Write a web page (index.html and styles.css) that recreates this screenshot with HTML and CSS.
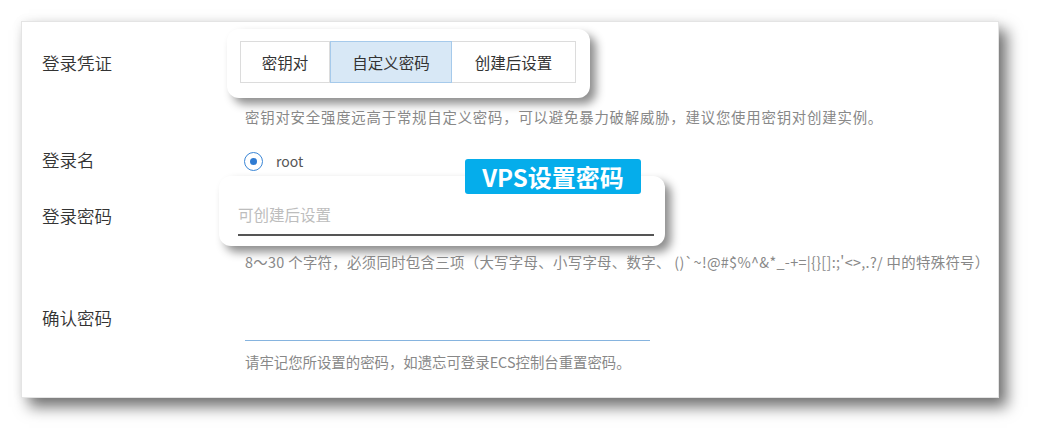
FILE: index.html
```html
<!DOCTYPE html>
<html lang="zh-CN">
<head>
<meta charset="utf-8">
<title>VPS设置密码</title>
<link rel="stylesheet" href="styles.css">
</head>
<body>
<div class="panel">
  <div class="row row-cred">
    <div class="label label-cred">登录凭证</div>
    <div class="field">
      <div class="callout seg-callout">
        <div class="seg">
          <div class="seg-btn seg-a">密钥对</div>
          <div class="seg-btn seg-b active">自定义密码</div>
          <div class="seg-btn seg-c">创建后设置</div>
        </div>
      </div>
      <div class="hint hint-1">密钥对安全强度远高于常规自定义密码，可以避免暴力破解威胁，建议您使用密钥对创建实例。</div>
    </div>
  </div>

  <div class="row row-name">
    <div class="label">登录名</div>
    <div class="field radio-line">
      <span class="radio"><span class="dot"></span></span>
      <span class="radio-text">root</span>
    </div>
  </div>

  <div class="row row-pwd">
    <div class="label label-pwd">登录密码</div>
    <div class="field">
      <div class="callout pwd-callout">
        <div class="pwd-input">可创建后设置</div>
      </div>
      <div class="hint hint-2">8～30 个字符，必须同时包含三项（大写字母、小写字母、数字、 ()`~!@#$%^&amp;*_-+=|{}[]:;'&lt;&gt;,.?/ 中的特殊符号）</div>
    </div>
  </div>

  <div class="row row-confirm">
    <div class="label">确认密码</div>
    <div class="field">
      <div class="confirm-input"></div>
      <div class="hint hint-3">请牢记您所设置的密码，如遗忘可登录ECS控制台重置密码。</div>
    </div>
  </div>

  <div class="badge">VPS设置密码</div>
</div>
</body>
</html>
```

FILE: styles.css
```css
* { box-sizing: border-box; }

html, body {
  margin: 0;
  padding: 0;
  background: #ffffff;
}

body {
  width: 1041px;
  height: 441px;
  overflow: hidden;
  font-family: "Noto Sans CJK SC", "Noto Sans", sans-serif;
  color: #333;
}

.panel {
  position: relative;
  margin: 21px 0 0 21px;
  width: 978px;
  height: 377px;
  background: #fff;
  border: 1px solid #e4e4e4;
  padding: 0 0 0 20px;
  box-shadow: 8px 9px 14px rgba(0, 0, 0, 0.55), 0 0 10px rgba(0, 0, 0, 0.06);
}

.row {
  display: flex;
  align-items: flex-start;
}

.label {
  width: 203px;
  flex: none;
  font-size: 17.5px;
  font-weight: 350;
  line-height: 24px;
  color: #333;
}

.field {
  flex: 1;
  min-width: 0;
}

/* Row 1 */
.row-cred { padding-top: 7px; }
.label-cred { margin-top: 22px; }

.callout {
  background: #fff;
  border-radius: 12px;
  box-shadow: 6px 6px 10px rgba(0, 0, 0, 0.45);
}

.seg-callout {
  width: 363px;
  height: 69px;
  margin-left: -18px;
  padding: 12px 0 0 13px;
}

.seg {
  display: flex;
  height: 42px;
}

.seg-btn {
  height: 42px;
  display: flex;
  align-items: center;
  justify-content: center;
  font-size: 15.5px;
  color: #333;
  border: 1px solid #dcdcdc;
  background: #fff;
}

.seg-a { width: 90px; }
.seg-b { width: 122px; border-left: none; }
.seg-c { width: 124px; border-left: none; }

.seg-btn.active {
  background: #d8e8f6;
  border: 1px solid #a6caeb;
}

.hint {
  font-size: 14.4px;
  line-height: 20px;
  color: #888;
  white-space: nowrap;
}

.hint-1 { margin-top: 9px; letter-spacing: 0.8px; }

/* Row 2 */
.row-name { margin-top: 21px; }

.radio-line {
  display: flex;
  align-items: center;
  height: 24px;
  padding-top: 2px;
}

.radio {
  width: 19px;
  height: 19px;
  border: 1.5px solid #3a86d6;
  border-radius: 50%;
  display: flex;
  align-items: center;
  justify-content: center;
  margin-left: -1px;
}

.dot {
  width: 7px;
  height: 7px;
  border-radius: 50%;
  background: #2f7bd2;
}

.radio-text {
  margin-left: 13px;
  font-size: 14px;
  color: #555;
}

/* Row 3 */
.row-pwd { margin-top: 4px; }
.label-pwd { margin-top: 28px; }

.pwd-callout {
  width: 446px;
  height: 70px;
  margin-left: -26px;
  padding: 24px 0 0 19px;
}

.pwd-input {
  width: 416px;
  height: 36px;
  border-bottom: 2px solid #555;
  font-size: 15.5px;
  line-height: 28px;
  color: #bdbdbd;
}

.hint-2 { margin-top: 6px; letter-spacing: 0.32px; }

/* Row 4 */
.row-confirm { margin-top: 34px; }

.confirm-input {
  width: 405px;
  height: 35px;
  border-bottom: 1.5px solid #86b4df;
}

.hint-3 { margin-top: 11px; }

/* Badge */
.badge {
  position: absolute;
  left: 443px;
  top: 137px;
  width: 176px;
  height: 35px;
  border-radius: 3px;
  background: #05adeb;
  color: #fff;
  font-weight: 700;
  font-size: 24px;
  line-height: 35px;
  text-align: center;
}
```
